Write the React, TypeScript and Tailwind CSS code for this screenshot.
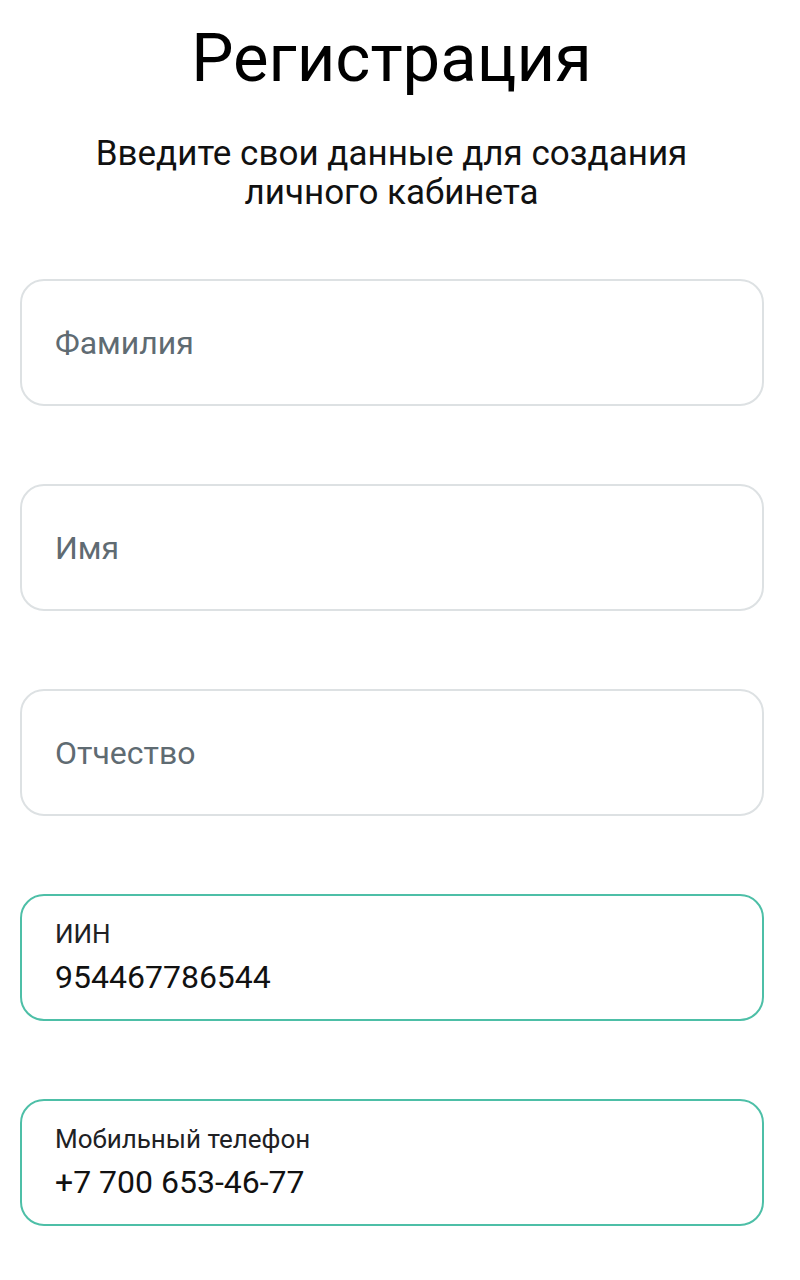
import React from 'react';

interface FieldProps {
  label: string;
  value?: string;
}

function Field({ label, value }: FieldProps) {
  if (value) {
    return (
      <div className="h-[127px] rounded-[24px] border-2 border-[#4dbfa7] bg-white pl-[33px] pr-[32px] flex flex-col justify-center">
        <span className="text-[26px] leading-[30px] text-[#202124]">{label}</span>
        <span className="mt-[8px] text-[32px] leading-[40px] text-[#111111]">{value}</span>
      </div>
    );
  }
  return (
    <div className="h-[127px] rounded-[24px] border-2 border-[#dde1e3] bg-white pl-[33px] pr-[32px] flex items-center">
      <span className="text-[32px] text-[#5f6b72]">{label}</span>
    </div>
  );
}

export default function App() {
  return (
    <div className="min-h-[1280px] bg-white w-[783px] font-['Roboto',sans-serif]">
      <h1 className="pt-[14px] text-center text-[67px] leading-[88px] text-black font-normal">Регистрация</h1>
      <p className="mt-[32px] text-center text-[35px] leading-[39px] text-[#111111]">
        Введите свои данные для создания
        <br />
        личного кабинета
      </p>
      <div className="mt-[67px] ml-[20px] w-[744px] flex flex-col gap-[78px]">
        <Field label="Фамилия" />
        <Field label="Имя" />
        <Field label="Отчество" />
        <Field label="ИИН" value="954467786544" />
        <Field label="Мобильный телефон" value="+7 700 653-46-77" />
      </div>
    </div>
  );
}
